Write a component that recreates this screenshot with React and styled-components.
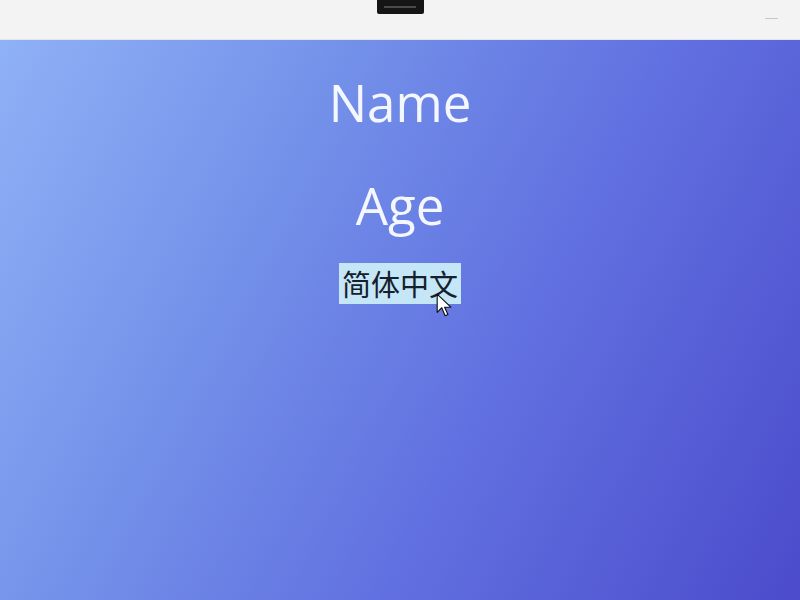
import styled, { createGlobalStyle } from "styled-components";

const GlobalStyle = createGlobalStyle`
  html, body {
    margin: 0;
    padding: 0;
    height: 100%;
    overflow: hidden;
  }
  #root {
    height: 100%;
  }
`;

const Window = styled.div`
  display: flex;
  flex-direction: column;
  width: 800px;
  height: 600px;
  font-family: "Open Sans", "Noto Sans", "Noto Sans CJK SC", sans-serif;
`;

const TitleBar = styled.div`
  position: relative;
  display: flex;
  justify-content: center;
  height: 40px;
  flex-shrink: 0;
  background: #f3f3f3;
  border-bottom: 1px solid #e2e4ee;
  box-sizing: border-box;
`;

const Notch = styled.div`
  display: flex;
  align-items: center;
  justify-content: center;
  width: 47px;
  height: 14px;
  background: #151515;
  border-radius: 0 0 2px 2px;
  &::after {
    content: "";
    width: 32px;
    height: 2px;
    background: #4a4a4a;
  }
`;

const Minimize = styled.div`
  position: absolute;
  right: 22px;
  top: 18px;
  width: 13px;
  height: 1px;
  background: #c8c8c8;
`;

const Content = styled.main`
  position: relative;
  flex: 1;
  display: flex;
  flex-direction: column;
  align-items: center;
  padding-top: 32px;
  background: linear-gradient(118deg, #8fb1f6 0%, #7390e9 33%, #6170e0 62%, #4b4bcb 100%);
`;

const Heading = styled.div`
  color: #f4f7ff;
  font-size: 51px;
  line-height: 60px;
  margin-bottom: ${(p) => p.gap}px;
`;

const Selected = styled.span`
  margin-top: 9px;
  padding: 2px 3px 3px;
  background: #c4e6f6;
  color: #14202c;
  font-family: "Noto Sans CJK SC", sans-serif;
  font-size: 29px;
  line-height: 36px;
`;

const Pointer = styled.svg`
  position: absolute;
  left: 436px;
  top: 253px;
`;

export default function App() {
  return (
    <>
      <GlobalStyle />
      <Window>
        <TitleBar>
          <Notch />
          <Minimize />
        </TitleBar>
        <Content>
          <Heading gap={43}>Name</Heading>
          <Heading gap={19}>Age</Heading>
          <Selected>简体中文</Selected>
          <Pointer width="16" height="25" viewBox="0 0 14 22">
            <path
              d="M1 1 L1 17 L5 13 L8 20 L10.5 19 L7.5 12.5 L13 12.5 Z"
              fill="#ffffff"
              stroke="#111111"
              strokeWidth="1"
              strokeLinejoin="round"
            />
          </Pointer>
        </Content>
      </Window>
    </>
  );
}
